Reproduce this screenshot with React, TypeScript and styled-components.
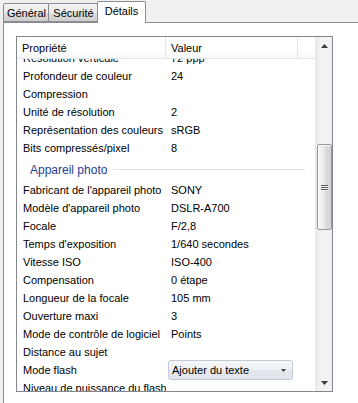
import React from "react";
import styled, { createGlobalStyle } from "styled-components";

const Global = createGlobalStyle`
  html, body { margin: 0; padding: 0; background: #f0f0f0; }
  body { font-family: "Liberation Sans", Arial, sans-serif; font-size: 11px; color: #000; }
  * { box-sizing: border-box; }
`;

const Window = styled.div`
  width: 358px;
  height: 403px;
  overflow: hidden;
  background: #f0f0f0;
  display: flex;
  flex-direction: column;
`;

const TabStrip = styled.div`
  display: flex;
  align-items: flex-end;
  height: 22px;
  flex: none;
  padding-left: 3px;
`;

const Tab = styled.div<{ $active?: boolean; $w: number }>`
  position: relative;
  width: ${(p) => p.$w}px;
  height: ${(p) => (p.$active ? 22 : 19)}px;
  margin: ${(p) => (p.$active ? "0 -1px -1px -2px" : "0 0 0 0")};
  z-index: ${(p) => (p.$active ? 2 : 1)};
  border: 1px solid #898c95;
  border-bottom: ${(p) => (p.$active ? "none" : "1px solid #898c95")};
  border-radius: 2px 2px 0 0;
  background: ${(p) =>
    p.$active
      ? "#ffffff"
      : "linear-gradient(#f2f2f2 0%, #ebebeb 50%, #dddddd 51%, #cfcfcf 100%)"};
  display: flex;
  justify-content: center;
  align-items: center;
  padding-bottom: ${(p) => (p.$active ? 3 : 0)}px;
  font-size: 11px;
  & + & { margin-left: ${(p) => (p.$active ? -2 : -1)}px; }
`;

const Panel = styled.div`
  flex: none;
  height: 400px;
  margin-left: 3px;
  width: 360px;
  background: #ffffff;
  border: 1px solid #898c95;
  padding: 13px 0 0 12px;
`;

const ListView = styled.div`
  width: 317px;
  height: 356px;
  border: 1px solid #828790;
  background: #fff;
  display: grid;
  grid-template-columns: 1fr 17px;
`;

const ListMain = styled.div`
  display: flex;
  flex-direction: column;
  min-width: 0;
  overflow: hidden;
`;

const Header = styled.div`
  height: 22px;
  flex: none;
  display: grid;
  grid-template-columns: 149px 132px 1fr;
  background: linear-gradient(#ffffff 0%, #ffffff 60%, #f7f8f9 100%);
  border-bottom: 1px solid #e5e5e5;
`;

const HeaderCell = styled.div<{ $pad: number; $divider?: boolean }>`
  display: flex;
  align-items: center;
  padding-left: ${(p) => p.$pad}px;
  border-right: ${(p) => (p.$divider ? "1px solid #e5e5e5" : "none")};
  white-space: nowrap;
`;

const Body = styled.div`
  flex: 1;
  overflow: hidden;
`;

const Rows = styled.div<{ $scroll: number }>`
  margin-top: ${(p) => -p.$scroll}px;
  display: flex;
  flex-direction: column;
`;

const Row = styled.div`
  height: 18px;
  display: grid;
  grid-template-columns: 149px 132px 1fr;
  align-items: center;
  white-space: nowrap;
`;

const NameCell = styled.div`
  padding-left: 6px;
  overflow: hidden;
`;

const ValueCell = styled.div`
  padding-left: 5px;
  overflow: hidden;
  display: flex;
  align-items: center;
`;

const Group = styled.div`
  height: 24px;
  display: flex;
  align-items: center;
  padding: 2px 10px 0 13px;
`;

const GroupTitle = styled.span`
  color: #1e3c92;
  font-size: 12px;
  white-space: nowrap;
`;

const GroupLine = styled.div`
  flex: 1;
  height: 1px;
  margin-left: 6px;
  margin-top: -1px;
  background: #dbe2ea;
`;

const Combo = styled.div`
  margin-left: -3px;
  width: 125px;
  height: 20px;
  border: 1px solid #c4cad1;
  border-radius: 3px;
  background: linear-gradient(#f4f6f9 0%, #eef1f5 50%, #e4e8ee 51%, #e0e5eb 100%);
  display: flex;
  align-items: center;
  justify-content: space-between;
  padding: 0 6px 0 3px;
`;

const SmallArrow = styled.svg`
  width: 5px;
  height: 3px;
  flex: none;
`;

const ScrollBar = styled.div`
  display: flex;
  flex-direction: column;
  background: linear-gradient(90deg, #e7e7e7 0%, #f2f2f2 20%, #f4f4f4 80%, #ececec 100%);
  border-left: 1px solid #eaeaea;
`;

const ScrollButton = styled.div`
  height: 17px;
  flex: none;
  display: flex;
  align-items: center;
  justify-content: center;
`;

const Track = styled.div`
  flex: 1;
  display: flex;
  flex-direction: column;
  align-items: center;
`;

const Thumb = styled.div<{ $top: number; $size: number }>`
  margin-top: ${(p) => p.$top}px;
  width: 15px;
  height: ${(p) => p.$size}px;
  border: 1px solid #979797;
  border-radius: 2px;
  background: linear-gradient(90deg, #f5f5f5 0%, #ececec 45%, #dcdcdc 55%, #d4d4d4 100%);
  box-shadow: inset 1px 1px 0 #fdfdfd;
  display: flex;
  align-items: center;
  justify-content: center;
`;

const Grip = styled.div`
  width: 7px;
  display: flex;
  flex-direction: column;
  gap: 1px;
  & > span {
    height: 1px;
    background: #5a5a5a;
    box-shadow: 0 1px 0 #f4f4f4;
  }
`;

const Arrow = ({ up }: { up?: boolean }) => (
  <svg width="7" height="4" viewBox="0 0 7 4">
    <polygon points={up ? "0,4 7,4 3.5,0" : "0,0 7,0 3.5,4"} fill="#3c3c3c" />
  </svg>
);

type Item = { name: string; value?: string; combo?: boolean };

const before: Item[] = [
  { name: "Résolution verticale", value: "72 ppp" },
  { name: "Profondeur de couleur", value: "24" },
  { name: "Compression" },
  { name: "Unité de résolution", value: "2" },
  { name: "Représentation des couleurs", value: "sRGB" },
  { name: "Bits compressés/pixel", value: "8" },
];

const camera: Item[] = [
  { name: "Fabricant de l'appareil photo", value: "SONY" },
  { name: "Modèle d'appareil photo", value: "DSLR-A700" },
  { name: "Focale", value: "F/2,8" },
  { name: "Temps d'exposition", value: "1/640 secondes" },
  { name: "Vitesse ISO", value: "ISO-400" },
  { name: "Compensation", value: "0 étape" },
  { name: "Longueur de la focale", value: "105 mm" },
  { name: "Ouverture maxi", value: "3" },
  { name: "Mode de contrôle de logiciel", value: "Points" },
  { name: "Distance au sujet" },
  { name: "Mode flash", value: "Ajouter du texte", combo: true },
  { name: "Niveau de puissance du flash" },
];

const renderRow = (it: Item) => (
  <Row key={it.name}>
    <NameCell>{it.name}</NameCell>
    <ValueCell>
      {it.combo ? (
        <Combo>
          <span>{it.value}</span>
          <SmallArrow viewBox="0 0 5 3">
            <polygon points="0,0 5,0 2.5,3" fill="#444" />
          </SmallArrow>
        </Combo>
      ) : (
        it.value
      )}
    </ValueCell>
  </Row>
);

export default function App() {
  return (
    <Window>
      <Global />
      <TabStrip>
        <Tab $w={47}>Général</Tab>
        <Tab $w={51}>Sécurité</Tab>
        <Tab $w={49} $active>
          Détails
        </Tab>
      </TabStrip>
      <Panel>
        <ListView>
          <ListMain>
            <Header>
              <HeaderCell $pad={5} $divider>
                Propriété
              </HeaderCell>
              <HeaderCell $pad={5} $divider>
                Valeur
              </HeaderCell>
              <HeaderCell $pad={0} />
            </Header>
            <Body>
              <Rows $scroll={10}>
                {before.map(renderRow)}
                <Group>
                  <GroupTitle>Appareil photo</GroupTitle>
                  <GroupLine />
                </Group>
                {camera.map(renderRow)}
              </Rows>
            </Body>
          </ListMain>
          <ScrollBar>
            <ScrollButton>
              <Arrow up />
            </ScrollButton>
            <Track>
              <Thumb $top={90} $size={86}>
                <Grip>
                  <span />
                  <span />
                  <span />
                </Grip>
              </Thumb>
            </Track>
            <ScrollButton>
              <Arrow />
            </ScrollButton>
          </ScrollBar>
        </ListView>
      </Panel>
    </Window>
  );
}
